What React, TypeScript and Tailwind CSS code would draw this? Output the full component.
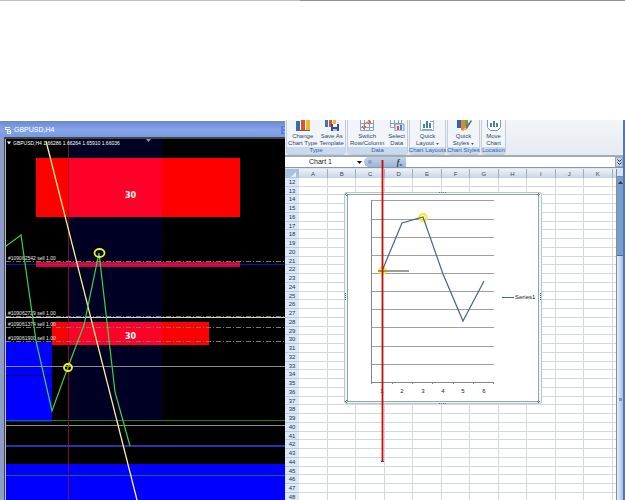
import React from "react";

type Point = [number, number];

const toPoints = (list: Point[]) => list.map((p) => p.join(",")).join(" ");

const price: Point[] = [
  [6, 246], [21, 235], [36, 341], [52, 411], [68, 367], [84, 325], [99, 253], [115, 392], [130, 446],
];

const orders = [
  { id: "#109062542", y: 261 },
  { id: "#109062729", y: 316 },
  { id: "#109061374", y: 327 },
  { id: "#109061900", y: 341 },
];

const series: Point[] = [
  [382, 271], [402, 223], [423, 217], [443, 274], [463, 321], [484, 281],
];

const gridLines = [200, 219, 237, 255, 273, 291, 309, 327, 346, 364];

const columns = ["A", "B", "C", "D", "E", "F", "G", "H", "I", "J", "K"];
const rows = Array.from({ length: 37 }, (_, i) => i + 12);

const RibbonButton = ({ lines, icon, menu }: { lines: [string, string]; icon: React.ReactNode; menu?: boolean }) => (
  <button className="flex flex-col items-center text-[6px] leading-[7px] text-[#2f4668] whitespace-nowrap">
    <svg viewBox="0 0 16 11" className="w-4 h-[11px] mb-0.5">{icon}</svg>
    <span>{lines[0]}</span>
    <span className="flex items-center gap-0.5">
      {lines[1]}
      {menu && <svg viewBox="0 0 4 3" className="w-[3px] h-0.5"><path d="M0 0h4L2 3z" fill="#3d5478" /></svg>}
    </span>
  </button>
);

const RibbonGroup = ({ title, width, children }: { title: string; width: string; children: React.ReactNode }) => (
  <div className={`${width} shrink-0 flex flex-col rounded-b-sm border-x border-b border-[#c3ced9] bg-[#f1f4f8]`}>
    <div className="h-[27px] flex justify-around items-start">{children}</div>
    <div className="h-[7px] flex justify-center bg-[#c8daf0] text-[6px] leading-[7px] text-[#3c60a0] whitespace-nowrap">{title}</div>
  </div>
);

const TradingWindow = () => (
  <section className="min-w-0 mt-px flex flex-col border-t border-[#7f8c92] bg-[#8f9bc9]">
    <div className="h-[15px] shrink-0 flex items-center gap-0.5 pl-1 bg-gradient-to-b from-[#6c8cda] via-[#85a4ea] to-[#7b98df]">
      <svg viewBox="0 0 8 8" className="w-2 h-2" fill="none" stroke="#e8f4ff">
        <path d="M1 1.5h5M1 3.5h5M3 5.5h4M3 7.5h4M1.5 1v3M3.5 4v3M6.5 4v3" />
      </svg>
      <h2 className="grow font-['Liberation_Sans',sans-serif] text-[7px] leading-[8px] text-white">GBPUSD,H4</h2>
      <svg viewBox="0 0 4 8" className="w-1 h-2"><path d="M4 0H1v8h3M4 4H2" fill="none" stroke="#3d5cc0" /></svg>
    </div>
    <div className="grow min-h-0 ml-1 border-t-2 border-l border-[#41454a] flex">
      <div className="grow min-w-0 border-l border-[#b9bcc4] bg-black">
        <svg viewBox="6 139 279 361" preserveAspectRatio="xMinYMin slice" className="block w-full h-full" fontFamily="'Liberation Sans Narrow', 'Liberation Sans', sans-serif">
          <rect x="68" y="139" width="94" height="283" fill="#000024" />
          <rect x="6" y="342" width="46" height="80" fill="#0000ff" />
          <rect x="6" y="464" width="279" height="36" fill="#0000ff" />
          <path d="M6 375.5H52" stroke="#000078" />

          {/* supply and demand zones */}
          <rect x="36" y="158" width="204" height="59" fill="#ff0000" />
          <rect x="68" y="158" width="94" height="59" fill="#ff0028" />
          <rect x="52" y="322" width="157" height="23" fill="#ff0000" />
          <rect x="68" y="322" width="94" height="23" fill="#ff0028" />
          <path d="M6 264.5H285" stroke="#1010b8" />
          <rect x="36" y="262" width="204" height="5" fill="#d4082c" />
          <path d="M36 264.5H240" stroke="#a0208c" />

          {/* price levels */}
          <path d="M6 317.5H285" stroke="#d4d4cc" />
          <path d="M6 366.5H285M6 425.5H285" stroke="#8c8c90" />
          <path d="M6 420.5H285" stroke="#148214" />
          <path d="M6 446H285" stroke="#3030b0" strokeWidth="2" />
          <path d="M6 475.5H285" stroke="#146478" />
          <path d="M68.5 139V500" stroke="#8c1438" strokeOpacity="0.8" />

          {orders.map((o) => (
            <g key={o.id}>
              <path d={`M6 ${o.y + 0.5}H285`} stroke="#787870" strokeDasharray="5 2 1 2" />
              <text x="8" y={o.y - 1} fontSize="5" fill="#e8e8e8">{o.id} sell 1.00</text>
            </g>
          ))}

          <path d="M46 141L137 500" stroke="#fff08c" strokeWidth="1.300" />
          <polyline points={toPoints(price)} fill="none" stroke="#3cd24b" strokeWidth="1.200" />
          <g fill="none" stroke="#f5f51e" strokeWidth="1.800">
            <ellipse cx="99.500" cy="253" rx="5" ry="4" />
            <ellipse cx="68" cy="367.500" rx="4" ry="3.500" />
          </g>

          <path d="M7 141.500h4l-2 3z" fill="#fff" />
          <path d="M146 139h5l-2.500 3z" fill="#9090a8" />
          <text x="13" y="145" fontSize="5" fill="#fff">GBPUSD,H4 1.66286 1.66264 1.65910 1.66036</text>
          <g fill="#fff" fontFamily="'DejaVu Sans', sans-serif" fontWeight="bold" fontSize="8">
            <text x="125" y="198">30</text>
            <text x="125" y="339">30</text>
          </g>
        </svg>
      </div>
    </div>
  </section>
);

const Ribbon = () => (
  <div className="h-[37px] shrink-0 pl-px flex items-start gap-px bg-gradient-to-b from-[#f3f5f8] to-[#e6ebf1] border-b-2 border-[#a5abb3]">
    <RibbonGroup title="Type" width="w-[60px]">
      <RibbonButton
        lines={["Change", "Chart Type"]}
        icon={<><path d="M1 1h4v9H1z" fill="#2f6fb0" /><path d="M6 0h4v10H6z" fill="#d8542a" /><path d="M11 0h4v10h-4z" fill="#efb632" /><path d="M1 10.500h14" stroke="#7a5a4a" /></>}
      />
      <RibbonButton
        lines={["Save As", "Template"]}
        icon={<><path d="M1 0h3v7H1z" fill="#3c78b8" /><path d="M5 0h3v7H5z" fill="#d8542a" /><path d="M9 0h3v4H9z" fill="#efb632" /><path d="M7 4h8v7H7z" fill="#34509c" /><path d="M9 4h4v3H9z" fill="#f4f8ff" /><path d="M9 9h4v2H9z" fill="#b4c4e4" /></>}
      />
    </RibbonGroup>
    <RibbonGroup title="Data" width="w-[61px]">
      <RibbonButton
        lines={["Switch", "Row/Column"]}
        icon={<><path d="M1.500 0v10.500h13V0M1 3.500h13M1 7.500h13M5.500 0v10M10.500 0v10" fill="none" stroke="#8da0bc" /><path d="M5 7c0-4 2-5 6-5M9 0l3 2-3 2M3 6l2 3 2-3" fill="none" stroke="#cc5a2c" /></>}
      />
      <RibbonButton
        lines={["Select", "Data"]}
        icon={<><path d="M1.500 0v7.500h11V0M1 3.500h11M5.500 0v7M9.500 0v7" fill="none" stroke="#8da0bc" /><path d="M6 4h9v7H6z" fill="#dce8f6" stroke="#8097b8" /><path d="M8 6h2v4H8z" fill="#d8542a" /><path d="M11 5h2v5h-2z" fill="#4a86c4" /></>}
      />
    </RibbonGroup>
    <RibbonGroup title="Chart Layouts" width="w-[37px]">
      <RibbonButton
        lines={["Quick", "Layout"]}
        menu
        icon={<><path d="M1.500 0v10.500h13V0" fill="#fff" stroke="#a3b3ca" /><path d="M4 4h2v4H4zM7 1h2v7H7zM10 3h2v5h-2z" fill="#4a80b8" /><path d="M3 9.500h10M11 1.500h3" stroke="#8da0bc" /></>}
      />
    </RibbonGroup>
    <RibbonGroup title="Chart Styles" width="w-[33px]">
      <RibbonButton
        lines={["Quick", "Styles"]}
        menu
        icon={<><path d="M1 0h4v8H1z" fill="#2d64b4" /><path d="M5 0h4v10H5z" fill="#e3852c" /><path d="M9 0h3v6H9z" fill="#62a83c" /><path d="M15 0L9 7l-3 4 5-2 5-8z" fill="#64748c" /><path d="M6 11l3-4 2 2z" fill="#f2c440" /></>}
      />
    </RibbonGroup>
    <RibbonGroup title="Location" width="w-[25px]">
      <RibbonButton
        lines={["Move", "Chart"]}
        icon={<><path d="M1.500 0v7.500l3 3h7l3-3V0" fill="#fff" stroke="#8497b4" /><path d="M4 3h2v4H4zM7 1h2v6H7zM10 3h2v4h-2z" fill="#4a80b8" /></>}
      />
    </RibbonGroup>
  </div>
);

const FormulaBar = () => (
  <div className="h-[11px] shrink-0 flex bg-white border-b border-[#8796a8] text-[#222]">
    <select aria-label="Name box" defaultValue="Chart 1" className="w-[72px] pl-6 appearance-none bg-white text-[7px] leading-[10px]">
      <option>Chart 1</option>
    </select>
    <svg viewBox="0 0 5 3" className="w-[5px] h-[3px] mt-1"><path d="M0 0h5L2.500 3z" fill="#111" /></svg>
    <div className="w-[42px] ml-0.5 flex items-center justify-between rounded-l-full bg-gradient-to-b from-[#c2d2e7] to-[#9fb5d3] pl-1 pr-1">
      <span className="w-1 h-1 rounded-full bg-[#8aa0c0]" />
      <button className="font-['Liberation_Serif',serif] italic font-bold text-[8px] leading-[9px] text-[#26384f]">
        f<sub className="text-[5px]">x</sub>
      </button>
    </div>
    <input aria-label="Formula" className="grow min-w-0 bg-white" />
    <button aria-label="Expand formula bar" className="w-2 flex items-center justify-center bg-[#c4d6ec] border border-[#93a9c6]">
      <svg viewBox="0 0 5 6" className="w-[5px] h-1.5"><path d="M0.500 0.500l2 2 2-2M0.500 3.500l2 2 2-2" fill="none" stroke="#222" /></svg>
    </button>
  </div>
);

const Sheet = () => (
  <table className="w-full table-fixed border-collapse h-[333px] text-[6px] leading-[6px]">
    <thead>
      <tr className="h-[9px] bg-gradient-to-b from-[#eef2f7] to-[#c9d5e4] text-[#3c4a60]">
        <th className="w-3.5 p-0 bg-[#a9c1e0]">
          <svg viewBox="0 0 14 8" className="block w-3.5 h-2"><path d="M11 2v5H6z" fill="#e6effa" /></svg>
        </th>
        {columns.map((c) => (
          <th key={c} className="p-0 font-normal border-r border-[#9fb0c4]">{c}</th>
        ))}
        <th className="w-1 p-0" />
      </tr>
    </thead>
    <tbody>
      {rows.map((r) => (
        <tr key={r}>
          <th className="p-0 font-normal bg-[#dce8f5] text-[#20324c] border-b border-[#b4c8de]">{r}</th>
          {columns.map((c) => (
            <td key={c} className="p-0 border-r border-b border-[#d3dada]" />
          ))}
          <td className="p-0 border-b border-[#d3dada]" />
        </tr>
      ))}
    </tbody>
  </table>
);

// Chart object floating over the cells, with the annotation drawn on top of it
const FloatingChart = () => (
  <svg viewBox="285 120 340 380" className="absolute left-0 top-0 w-[340px] h-[380px] pointer-events-none" fontFamily="'Liberation Sans', sans-serif">
    <rect x="344.500" y="192.500" width="197" height="211" rx="2" fill="#f1f7f8" stroke="#b4c8c8" />
    <rect x="347.500" y="194.500" width="191" height="207" fill="#fff" stroke="#8fa9a9" />
    <g fill="none" stroke="#64787c" strokeDasharray="1 1">
      <path d="M439 192.500h8M439 403.500h8M345.500 293v8M540.500 293v8" />
      <path d="M345 194.500h4M346.500 193v4M537 194.500h4M538.500 193v4M345 401.500h4M346.500 400v4M537 401.500h4M538.500 400v4" />
    </g>
    {gridLines.map((y) => (
      <path key={y} d={`M371 ${y + 0.5}H494`} stroke="#a0a0a0" />
    ))}
    <path d="M371.500 200V383M371 382.500H494" fill="none" stroke="#858585" />
    {[371, 392, 412, 432, 453, 473, 493].map((x) => (
      <path key={x} d={`M${x + 0.5} 382v2`} stroke="#858585" />
    ))}
    {series.map(([x], i) => (
      <text key={x} x={x} y="393" fontSize="6" textAnchor="middle" fill="#222">{i + 1}</text>
    ))}
    <g fill="none" stroke="#f5f032" strokeWidth="2.500">
      <circle cx="423" cy="217.500" r="3.500" />
      <circle cx="382.500" cy="270.500" r="3" />
    </g>
    <path d="M378 271H409" stroke="#76807a" strokeWidth="1.500" />
    <polyline points={toPoints(series)} fill="none" stroke="#41668f" strokeWidth="1.200" />
    <path d="M502 297.500H514" stroke="#41668f" />
    <text x="515" y="299" fontSize="6" fill="#222">Series1</text>
    <path d="M382.500 160V461" stroke="#cc0a0a" strokeWidth="1.800" />
    <path d="M381 461.500h3" stroke="#444" />
  </svg>
);

const SpreadsheetWindow = () => (
  <section className="relative min-w-0 flex border-r-2 border-[#4f79ae] bg-white font-['Liberation_Sans',sans-serif]">
    <div className="grow min-w-0 flex flex-col">
      <Ribbon />
      <FormulaBar />
      <div className="h-px shrink-0 bg-[#dbe6f2]" />
      <div className="flex items-start">
        <div className="grow min-w-0"><Sheet /></div>
        <div className="w-[7px] shrink-0 self-stretch flex flex-col border-l border-[#7a9290] bg-[#cfdcf0]">
          <div className="h-2 bg-[#d5e3f2] border-b border-[#6d8bb0]" />
          <div className="h-[79px] flex justify-center bg-[#7a9cc8] border-b border-[#4a6c9c]">
            <svg viewBox="0 0 5 3" className="w-[5px] h-[3px] mt-1"><path d="M0 3h5L2.500 0z" fill="#263c5c" /></svg>
          </div>
          <div className="grow flex justify-center bg-gradient-to-r from-[#e6eefa] to-[#a9bddf] pt-[142px]">
            <span className="w-[3px] h-[3px] bg-[#8495b4]" />
          </div>
        </div>
      </div>
    </div>
    <FloatingChart />
  </section>
);

export default function App() {
  return (
    <main className="h-screen overflow-hidden flex flex-col bg-white">
      <header className="h-[120px] shrink-0 flex">
        <div className="w-[48%] h-px bg-[#c2c2c2]" />
        <div className="grow h-px bg-[#909096]" />
      </header>
      <div className="grow min-h-0 grid grid-cols-[285fr_340fr] grid-rows-1">
        <TradingWindow />
        <SpreadsheetWindow />
      </div>
    </main>
  );
}
